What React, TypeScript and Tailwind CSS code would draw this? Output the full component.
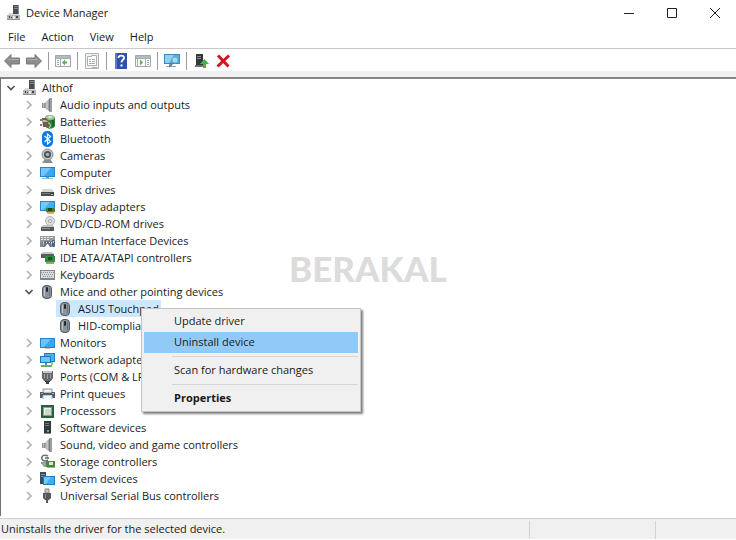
import { clsx } from "clsx";
import React from "react";

type IconProps = { children: React.ReactNode };

const Glyph: React.FC<IconProps> = ({ children }) => (
  <svg viewBox="0 0 16 16" className="h-4 w-4 shrink-0" aria-hidden="true">
    {children}
  </svg>
);

const ComputerNodeIcon = () => (
  <Glyph>
    <path d="M7 0h6v9H7z" fill="#4a4d4f" />
    <path d="M8 1h4v1H8zM8 3h4v1H8z" fill="#85888a" />
    <path d="M12 0h1v9h-1z" fill="#8a8d8f" />
    <path d="M3 8h4v1h6l1 2H1z" fill="#d6d8d9" />
    <path d="M1 10h13v5H1z" fill="#b4b7b9" />
    <path d="M1 14h13v1H1z" fill="#8e9193" />
    <path d="M3 11h1v2H3zM5 12h1v1H5zM10 11h2v2h-2z" fill="#444" />
    <path d="M7 11h2v3H7z" fill="#e8e9ea" />
  </Glyph>
);

const SpeakerIcon = () => (
  <Glyph>
    <path d="M2 6h3v5H2z" fill="#8c8f91" />
    <path d="M3 6h1v5H3z" fill="#b9bcbe" />
    <path d="M5 6l5-5v14l-5-4z" fill="#a2a5a7" />
    <path d="M6 5l2-2v10l-2-2z" fill="#c2c5c7" />
    <path d="M9 2l1-1v14l-1-1z" fill="#74777a" />
    <path d="M10 1h2v14h-2z" fill="#9c9fa2" />
  </Glyph>
);

const BatteryIcon = () => (
  <Glyph>
    <path d="M5 4c0-4 9-4 10 0v8c-1 3-8 4-10 0z" fill="#34813a" />
    <ellipse cx="10" cy="3.500" rx="4.500" ry="2.500" fill="#9ccb98" />
    <ellipse cx="10" cy="3" rx="2" ry="1" fill="#dcebda" />
    <path d="M6 6h3v3H6z" fill="#71b96f" />
    <path d="M12 6h2v6l-2 1z" fill="#215d29" />
    <path d="M0 5h2v2H0zM0 10h2v2H0z" fill="#8b7d6c" />
    <path d="M2 4h4l3 3v3l-3 3H3z" fill="#6d5f50" />
    <path d="M3 6h3l2 2H3z" fill="#c6b7a2" />
    <path d="M8 9c3 0 3 3 1 5" fill="none" stroke="#e3e5e0" />
  </Glyph>
);

const BluetoothIcon = () => (
  <Glyph>
    <rect x="2" y="0" width="11" height="16" rx="5" fill="#0a78e6" />
    <path d="M4.500 5l6 5.500L7.500 13V3l3 2.500-6 5.500" fill="none" stroke="#fff" strokeWidth="1.200" />
  </Glyph>
);

const CameraIcon = () => (
  <Glyph>
    <path d="M5 11h5l3 4H2z" fill="#8a8d8f" />
    <circle cx="7.500" cy="6.500" r="5.500" fill="#c3c6c8" stroke="#85888a" />
    <circle cx="7.500" cy="6.500" r="3.500" fill="#4c5054" />
    <circle cx="7.500" cy="6.500" r="1.800" fill="#9fb2c2" />
  </Glyph>
);

const MonitorIcon = () => (
  <Glyph>
    <path d="M0 3h15v10H0z" fill="#2386cc" />
    <path d="M1 4h13v8H1z" fill="#3aa6ee" />
    <path d="M1 4h10L4 12H1z" fill="#6cc2f6" />
    <path d="M5 13h5v1H5z" fill="#b4c4ce" />
  </Glyph>
);

const DesktopIcon = () => (
  <Glyph>
    <path d="M0 2h15v10H0z" fill="#2386cc" />
    <path d="M1 3h13v8H1z" fill="#3aa6ee" />
    <path d="M1 3h10L4 11H1z" fill="#72c6f8" />
    <path d="M6 12h3v1H6z" fill="#7b94a5" />
    <path d="M2 13h11v1H2z" fill="#9cbacd" />
  </Glyph>
);

const DiskIcon = () => (
  <Glyph>
    <path d="M3 7h9l2 3H1z" fill="#d3d5d6" />
    <path d="M1 10h13v4H1z" fill="#484b4e" />
    <path d="M2 11h8v1H2z" fill="#77797c" />
    <path d="M11 12h2v1h-2z" fill="#7dd47d" />
  </Glyph>
);

const DisplayAdapterIcon = () => (
  <Glyph>
    <path d="M0 2h15v10H0z" fill="#2588cb" />
    <path d="M1 3h13v8H1z" fill="#45aeec" />
    <path d="M1 3h9l-7 8H1z" fill="#75cbf7" />
    <path d="M6 9h9v4H6z" fill="#39853f" />
    <path d="M8 9h4v3H8z" fill="#1e4524" />
    <path d="M7 13h7v2H7z" fill="#d8b64c" />
  </Glyph>
);

const DiscDriveIcon = () => (
  <Glyph>
    <circle cx="10" cy="5" r="4.500" fill="#dcdee0" stroke="#b0b3b5" />
    <circle cx="10" cy="5" r="1.500" fill="#fff" stroke="#9c9fa1" />
    <path d="M3 9h10l1 2H1z" fill="#c3c6c8" />
    <path d="M1 11h13v4H1z" fill="#55585b" />
    <path d="M2 12h8v1H2z" fill="#8e9193" />
  </Glyph>
);

const HidIcon = () => (
  <Glyph>
    <path d="M0 3h15v6H0z" fill="#979ca1" />
    <path d="M1 4h2v1H1zM4 4h2v1H4zM7 4h2v1H7zM10 4h3v1h-3zM1 6h2v1H1zM4 6h2v1H4zM7 6h2v1H7z" fill="#f1f3f4" />
    <path d="M4 8h7l1 6h-2l-2-3H7l-2 3H3z" fill="#67727c" />
    <path d="M0 9h3v5H0z" fill="#7d8993" />
    <path d="M6 9h1v1H6zM9 9h1v1H9z" fill="#dfe5ea" />
    <rect x="12" y="7" width="3" height="7" rx="1" fill="#4a6581" />
    <path d="M13 8h1v2h-1z" fill="#c9d3dc" />
  </Glyph>
);

const IdeIcon = () => (
  <Glyph>
    <path d="M3 2h9l2 2H1z" fill="#c3c6c8" />
    <path d="M1 4h13v4H1z" fill="#595d60" />
    <path d="M5 6h10v6H5z" fill="#358a42" />
    <path d="M8 7h4v3H8z" fill="#1f5129" />
    <path d="M6 12h8v2H6z" fill="#8fae62" />
  </Glyph>
);

const KeyboardIcon = () => (
  <Glyph>
    <path d="M0 3h15v10H0z" fill="#80868a" />
    <path d="M1 4h13v7H1z" fill="#d9dcde" />
    <path d="M1 5.500h13M2 7.500h12M3 9.500h9" stroke="#8a9196" strokeDasharray="1 1" />
  </Glyph>
);

const MouseIcon = () => (
  <Glyph>
    <rect x="2.500" y="1.500" width="9" height="13" rx="3.500" fill="#8b949c" stroke="#555b61" />
    <path d="M4 4h1v8H4z" fill="#bcc3c9" />
    <rect x="6" y="3" width="2" height="5" rx="1" fill="#22262a" />
    <path d="M9 4h1v8H9z" fill="#6b737b" />
  </Glyph>
);

const NetworkIcon = () => (
  <Glyph>
    <path d="M4 1h11v9H4z" fill="#1f7fc4" />
    <path d="M5 2h9v7H5z" fill="#49b1f0" />
    <path d="M0 4h11v7H0z" fill="#1b78b8" />
    <path d="M1 5h9v5H1z" fill="#6cc6f7" />
    <path d="M5 11h2v2H5z" fill="#6f8796" />
    <path d="M1 13h11v2H1z" fill="#5fb36a" />
    <path d="M11 10h2v3h-2z" fill="#8cc792" />
  </Glyph>
);

const PortIcon = () => (
  <Glyph>
    <path d="M2 2h11v7l-2 3H4L2 9z" fill="#66696c" />
    <path d="M3 2h9v2H3z" fill="#c5c8ca" />
    <path d="M4 5h1v4H4zM7 5h1v5H7zM10 5h1v4h-1z" fill="#9fa2a5" />
    <path d="M5 12h5v1H5zM6 13h3v2H6z" fill="#3d4043" />
  </Glyph>
);

const PrinterIcon = () => (
  <Glyph>
    <path d="M3 3h9v4H3z" fill="#eef1f2" stroke="#899299" />
    <path d="M0 6h3l1 1h7l1-1h3v6H0z" fill="#535c63" />
    <path d="M1 7h2v1H1zM12 7h2v1h-2z" fill="#a5afb6" />
    <path d="M3 9h9l1 4H2z" fill="#a8dcee" />
    <path d="M4 10h7v3H4z" fill="#f7fbfd" />
  </Glyph>
);

const ProcessorIcon = () => (
  <Glyph>
    <path d="M1 2h13v13H1z" fill="#2c5f3c" />
    <path d="M3 4h9v9H3z" fill="#7aa986" />
    <path d="M4 5h7v7H4z" fill="#f2f4f2" />
    <path d="M5 6h6v6H5z" fill="#d3d7d4" />
  </Glyph>
);

const SoftwareIcon = () => (
  <Glyph>
    <path d="M4 1h7v12H4z" fill="#35383a" />
    <path d="M5 3h4v1H5zM5 5h4v1H5z" fill="#77797b" />
    <path d="M7 10h2v2H7z" fill="#55b85c" />
    <path d="M4 13h7v1H4z" fill="#898c8e" />
  </Glyph>
);

const StorageIcon = () => (
  <Glyph>
    <path d="M8 2C4 0 1 2 2 5s4 2 6 1" fill="none" stroke="#6b6f72" strokeWidth="1.500" />
    <path d="M5 4h4M1 9h6" stroke="#5c6063" strokeWidth="1.500" />
    <path d="M1 9l3-1h4v5H4z" fill="#9ca0a3" />
    <path d="M6 7h9v6H6z" fill="#3b8b45" />
    <path d="M9 8h4v3H9z" fill="#dbe5d9" />
    <path d="M7 13h8v1H7z" fill="#c9ad4b" />
  </Glyph>
);

const SystemIcon = () => (
  <Glyph>
    <path d="M0 1h6v12H0z" fill="#3f4a52" />
    <path d="M1 3h4v1H1zM1 5h3v1H1z" fill="#8b979f" />
    <path d="M3 5h12v9H3z" fill="#1d7cc0" />
    <path d="M4 6h10v7H4z" fill="#40aeef" />
    <path d="M4 6h7l-5 7H4z" fill="#70c9f7" />
  </Glyph>
);

const UsbIcon = () => (
  <Glyph>
    <path d="M5 1h4v4H5z" fill="#c6c9cb" stroke="#808385" />
    <path d="M3 5h8v5l-2 2H5l-2-2z" fill="#55585b" />
    <path d="M5 6h1v4H5z" fill="#8e9193" />
    <path d="M6 12h2v3H6z" fill="#585b5e" />
  </Glyph>
);

const Arrow = ({ flip }: { flip?: boolean }) => (
  <svg viewBox="0 0 16 16" className={clsx("h-4 w-4", flip && "-scale-x-100")} aria-hidden="true">
    <path d="M.5 8L7 1.500V5h8.500v6H7v3.500z" fill="#8b8d8f" stroke="#77797b" />
    <path d="M3 8l3-3v1h9v1H5z" fill="#a8aaab" />
  </svg>
);

const ConsoleTreeIcon = () => (
  <Glyph>
    <path d="M.5 2.500h15v11H.5z" fill="#fafafa" stroke="#a1a7ac" />
    <path d="M1 3h14v2H1z" fill="#b3bac0" />
    <path d="M1 5.500h14M5.500 5v8" stroke="#a5acb2" />
    <path d="M2 7.500h2M2 9.500h2M2 11.500h2" stroke="#9bb0c2" />
    <path d="M7 9.500l3-3v2h2v2h-2v2z" fill="#5eab58" />
  </Glyph>
);

const ActionPaneIcon = () => (
  <Glyph>
    <path d="M.5 2.500h15v11H.5z" fill="#fafafa" stroke="#a1a7ac" />
    <path d="M1 3h14v2H1z" fill="#b3bac0" />
    <path d="M1 5.500h14M10.500 5v8M2.500 5v8" stroke="#a5acb2" />
    <path d="M12 7.500h2M12 9.500h2M12 11.500h2" stroke="#9bb0c2" />
    <path d="M8 9.500l-3-3v6z" fill="#5eab58" />
  </Glyph>
);

const PropertiesIcon = () => (
  <Glyph>
    <path d="M1.500.5h13v15h-13z" fill="#f1f2f2" stroke="#b0b3b5" />
    <path d="M3.500 3.500h4v-1h5v10h-9z" fill="#fff" stroke="#adb0b2" />
    <path d="M5 6.500h2M8 6.500h3M5 8.500h2M8 8.500h3M5 10.500h6M8 14.500h5" stroke="#a9acae" />
  </Glyph>
);

const HelpIcon = () => (
  <Glyph>
    <path d="M2 0h12v16H2z" fill="#2f51ad" />
    <path d="M2 0h2v16H2z" fill="#5e7dce" />
    <path d="M5.500 5c0-3.500 6-3 5.500 0-.3 2-2.500 2-2.500 4.500" fill="none" stroke="#fff" strokeWidth="1.800" />
    <path d="M7.500 11.500h2v2h-2z" fill="#fff" />
  </Glyph>
);

const ScanIcon = () => (
  <Glyph>
    <path d="M0 1h16v10H0z" fill="#4087b4" />
    <path d="M1 2h14v8H1z" fill="#53b3e3" />
    <path d="M1 2h9L5 10H1z" fill="#8bd3f1" />
    <path d="M2 13h10v1H2zM5 11h3v2H5z" fill="#8fa3b0" />
    <circle cx="11" cy="7" r="3" fill="#a6dcf3" stroke="#6ba9c8" />
    <path d="M9 10l-4 4" stroke="#5d7f93" strokeWidth="1.500" />
  </Glyph>
);

const UpdateDriverIcon = () => (
  <Glyph>
    <path d="M3 1h7v11H3z" fill="#35383a" />
    <path d="M4 3h4v1H4zM4 5h4v1H4z" fill="#888b8d" />
    <path d="M2 12h8v2H2z" fill="#6f7274" />
    <path d="M11.500 6L16 11h-3v4h-3v-4H7z" fill="#3fb54a" />
  </Glyph>
);

const DeleteIcon = () => (
  <Glyph>
    <path d="M3 2.500l10.500 11M14 2.500l-11.500 11" stroke="#d3151f" strokeWidth="3" />
  </Glyph>
);

const Chevron = ({ open }: { open?: boolean }) => (
  <svg viewBox="0 0 10 10" className="h-[10px] w-[10px]" aria-hidden="true">
    <path
      d={open ? "M1.500 3l3.500 3.500L8.500 3" : "M3 1l4 4-4 4"}
      fill="none"
      stroke={open ? "#505050" : "#b0b0b0"}
      strokeWidth="1.600"
    />
  </svg>
);

interface TreeNode {
  label: string;
  icon: React.FC;
  open?: boolean;
  selected?: boolean;
  children?: TreeNode[];
}

const categories: TreeNode[] = [
  { label: "Audio inputs and outputs", icon: SpeakerIcon },
  { label: "Batteries", icon: BatteryIcon },
  { label: "Bluetooth", icon: BluetoothIcon },
  { label: "Cameras", icon: CameraIcon },
  { label: "Computer", icon: DesktopIcon },
  { label: "Disk drives", icon: DiskIcon },
  { label: "Display adapters", icon: DisplayAdapterIcon },
  { label: "DVD/CD-ROM drives", icon: DiscDriveIcon },
  { label: "Human Interface Devices", icon: HidIcon },
  { label: "IDE ATA/ATAPI controllers", icon: IdeIcon },
  { label: "Keyboards", icon: KeyboardIcon },
  {
    label: "Mice and other pointing devices",
    icon: MouseIcon,
    open: true,
    children: [
      { label: "ASUS Touchpad", icon: MouseIcon, selected: true },
      { label: "HID-compliant", icon: MouseIcon },
    ],
  },
  { label: "Monitors", icon: MonitorIcon },
  { label: "Network adapters", icon: NetworkIcon },
  { label: "Ports (COM & LPT)", icon: PortIcon },
  { label: "Print queues", icon: PrinterIcon },
  { label: "Processors", icon: ProcessorIcon },
  { label: "Software devices", icon: SoftwareIcon },
  { label: "Sound, video and game controllers", icon: SpeakerIcon },
  { label: "Storage controllers", icon: StorageIcon },
  { label: "System devices", icon: SystemIcon },
  { label: "Universal Serial Bus controllers", icon: UsbIcon },
];

const root: TreeNode = {
  label: "Althof",
  icon: ComputerNodeIcon,
  open: true,
  children: categories,
};

const TreeItem: React.FC<{ node: TreeNode; leaf?: boolean }> = ({ node, leaf }) => {
  const Icon = node.icon;
  return (
    <li>
      <div className="flex h-[17px] items-center">
        {leaf ? (
          <span className="w-[18px] shrink-0" />
        ) : (
          <button
            aria-label={`Toggle ${node.label}`}
            className="flex w-[18px] shrink-0 items-center justify-center"
          >
            <Chevron open={node.open} />
          </button>
        )}
        <span className={clsx("flex items-center pl-[2px]", node.selected && "bg-[#cce8ff]")}>
          <Icon />
          <span className="pr-[2px] pl-1 leading-[17px] whitespace-nowrap">{node.label}</span>
        </span>
      </div>
      {node.children && (
        <ul className="pl-[18px]">
          {node.children.map((child) => (
            <TreeItem key={child.label} node={child} leaf={node !== root} />
          ))}
        </ul>
      )}
    </li>
  );
};

const toolGroups: { label: string; icon: React.ReactNode }[][] = [
  [
    { label: "Back", icon: <Arrow /> },
    { label: "Forward", icon: <Arrow flip /> },
  ],
  [{ label: "Show/Hide Console Tree", icon: <ConsoleTreeIcon /> }],
  [{ label: "Properties", icon: <PropertiesIcon /> }],
  [
    { label: "Help", icon: <HelpIcon /> },
    { label: "Show/Hide Action Pane", icon: <ActionPaneIcon /> },
  ],
  [{ label: "Scan for hardware changes", icon: <ScanIcon /> }],
  [
    { label: "Update device driver", icon: <UpdateDriverIcon /> },
    { label: "Uninstall device", icon: <DeleteIcon /> },
  ],
];

const TitleBar = () => (
  <header className="flex h-[26px] items-center pl-[6px]">
    <ComputerNodeIcon />
    <h1 className="ml-1 flex-1">Device Manager</h1>
    {[
      { label: "Minimize", path: "M0 5.500h10" },
      { label: "Maximize", path: "M.5.5h9v9h-9z" },
      { label: "Close", path: "M0 0l10 10M10 0L0 10" },
    ].map(({ label, path }) => (
      <button key={label} aria-label={label} className="flex h-full w-[43px] items-center justify-center">
        <svg viewBox="0 0 10 10" className="h-[10px] w-[10px]" aria-hidden="true">
          <path d={path} fill="none" stroke="#222" />
        </svg>
      </button>
    ))}
  </header>
);

const ContextMenu = () => (
  <div
    role="menu"
    className="absolute top-[229px] left-[140px] flex w-[220px] flex-col border border-[#c4c4c4] bg-[#f0f0f0] p-[2px] shadow-[2px_2px_2px_rgba(0,0,0,0.5)]"
  >
    <button role="menuitem" className="h-[21px] pl-[30px] text-left">
      Update driver
    </button>
    <button role="menuitem" className="h-[21px] bg-[#91c9f7] pl-[30px] text-left">
      Uninstall device
    </button>
    <hr className="my-[3px] ml-7 border-[#d5d5d5]" />
    <button role="menuitem" className="h-[21px] pl-[30px] text-left">
      Scan for hardware changes
    </button>
    <hr className="my-[3px] ml-7 border-[#d5d5d5]" />
    <button role="menuitem" className="h-[21px] pl-[30px] text-left font-bold">
      Properties
    </button>
  </div>
);

export default function App() {
  return (
    <div className="flex min-h-screen flex-col bg-white pb-px font-['Open_Sans','Noto_Sans',sans-serif] text-[11px] text-[#1a1a1a]">
      <TitleBar />

      <nav className="flex h-[22px] items-center">
        {["File", "Action", "View", "Help"].map((item) => (
          <button key={item} className="h-full px-2">
            {item}
          </button>
        ))}
      </nav>

      <div role="toolbar" className="flex h-[23px] items-center border-t border-[#c8c8c8] pt-px pl-px">
        {toolGroups.map((group, i) => (
          <React.Fragment key={i}>
            {i > 0 && <span className="mx-[3px] h-[18px] w-px bg-[#9c9c9c]" />}
            {group.map(({ label, icon }) => (
              <button key={label} aria-label={label} className="flex w-[22px] items-center justify-center">
                {icon}
              </button>
            ))}
          </React.Fragment>
        ))}
      </div>

      <div className="h-[6px] bg-[#f0f0f0]" />

      <main className="relative flex-1 border-t-2 border-l border-t-[#858585] border-l-[#707070] pl-px">
        <ul>
          <TreeItem node={root} />
        </ul>
        <p className="pointer-events-none absolute top-[169px] left-[288px] font-[Lato,sans-serif] text-[35px] leading-[40px] font-black text-[#dcdcdc]">
          BERAKAL
        </p>
        <ContextMenu />
      </main>

      <footer className="mt-[2px] flex h-[21px] items-center border-t border-[#d0d0d0] bg-[#f0f0f0] pt-px pl-px">
        <span className="flex-1">Uninstalls the driver for the selected device.</span>
        <span className="h-[18px] w-[126px] border-l border-[#d4d4d4]" />
        <span className="h-[18px] w-[81px] border-l border-[#d4d4d4]" />
      </footer>
    </div>
  );
}
